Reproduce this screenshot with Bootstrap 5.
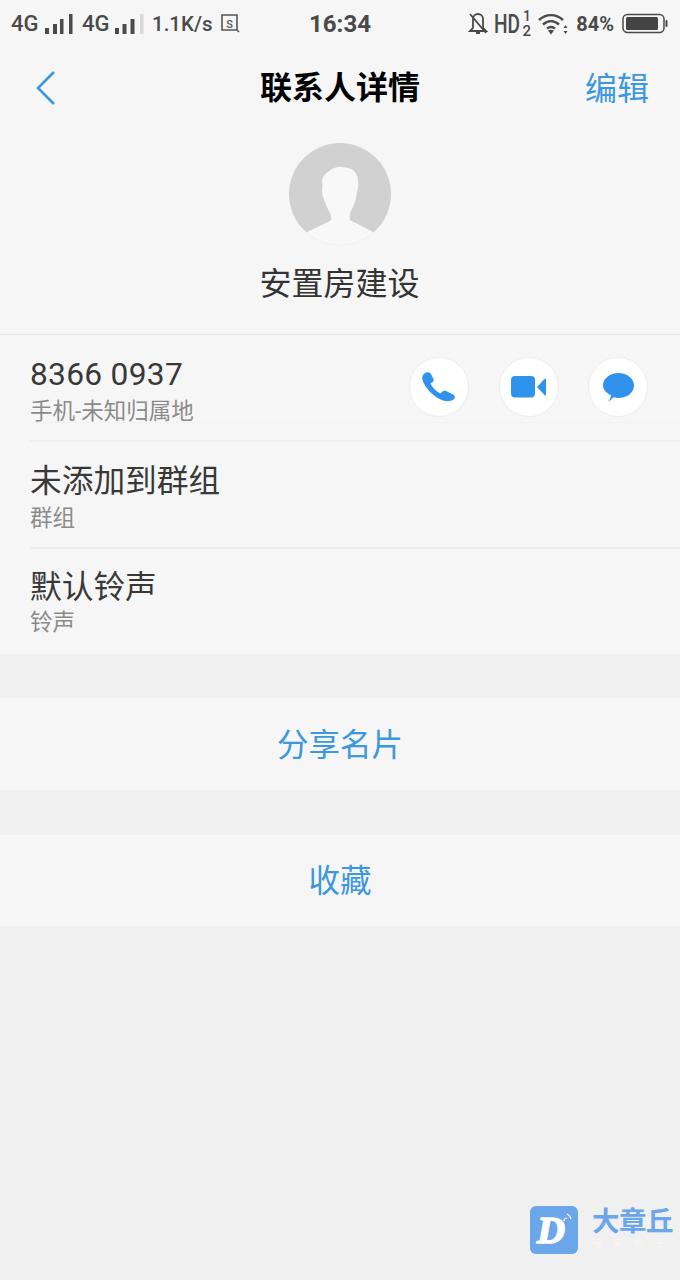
<!DOCTYPE html>
<html lang="zh"><head><meta charset="utf-8"><title>联系人详情</title>
<link href="https://cdn.jsdelivr.net/npm/bootstrap@5.3.0/dist/css/bootstrap.min.css" rel="stylesheet">
<style>
html,body{height:100%}
body{background:#f0f0f0;font-family:"Roboto","Noto Sans CJK SC",sans-serif;color:#333;width:680px;height:1280px;overflow:hidden;position:relative}
.topzone{background:#f6f6f6;height:334px}
.sbar{height:48px;padding:0 12px 0 11px;color:#4a4a4a;font-weight:500}
.sbar .tx{font-size:22px;line-height:48px;width:27px;white-space:nowrap}
.sbar .sp{font-size:20.5px;line-height:48px}
.sbar .pc{font-size:20px;font-weight:700;line-height:48px}
.sbar .tm{font-size:24px;position:absolute;left:0;right:0;top:0;line-height:48px;text-align:center;font-weight:700}
.g6{margin-left:6px}.g8{margin-left:8px}.g9{margin-left:9px}.g4{margin-left:4px}.g7{margin-left:7px}
.navz{height:80px;padding:0 31px 0 36px}
.navz h1{font-size:32px;font-weight:700;color:#000;margin:0;line-height:80px;top:0;position:absolute;left:0;right:0;text-align:center}
.blue{color:#3b97e0}
.edit{font-size:32px;line-height:80px;top:1px}
.avat{width:102px;height:102px;border-radius:50%;background:#d1d1d1;overflow:hidden;margin:15px auto 0;display:block}
.nm{font-size:32px;text-align:center;line-height:40px;margin-top:19px;color:#333;padding-right:1px}
.listz{background:#f6f6f6;border-top:1px solid #e9e9e9;height:320px}
.rowz{height:107px;margin-left:30px;border-bottom:2px solid #eeeeee;padding-top:20px;position:relative}
.rowz.last{border-bottom:0;padding-top:19px}
.rowz.first{height:107px;padding-top:20px}
.rowz.first::after{content:"";position:absolute;left:0;right:0;top:87px;height:1px;background:#f2f2f2}
.ttl{font-size:31.7px;line-height:40px;color:#383838}
.num{letter-spacing:.3px}
.sub{font-size:22.5px;line-height:30px;color:#8b8b8b;margin-top:1px}
.last .sub{margin-top:-1px}
.acts{position:absolute;right:32px;top:22px;gap:29.5px}
.rnd{width:60px;height:60px;border-radius:50%;background:#fff;border:1px solid #f0ecec}
.btnz{background:#f6f6f6;text-align:center;font-size:31.5px;color:#3b97e0}
.b1{margin-top:44px;height:92px;line-height:96px}
.b2{margin-top:45px;height:91px;line-height:93px}
.wm{position:absolute;left:530px;top:1206px;gap:14px}
.wmi{width:48px;height:48px;border-radius:6px;background:#6ba5ea}
.wmt{font-size:27.5px;line-height:30px;font-weight:700;color:#6ba5ea;width:84px;letter-spacing:-.5px;white-space:nowrap;margin-top:1px}
.wms{font-size:10px;line-height:14px;color:#f7f7f7;letter-spacing:11px;white-space:nowrap}
.dlogo{font-family:"Liberation Serif",serif;font-weight:700;font-style:italic;font-size:38px;fill:#fff;stroke:#fff;stroke-width:1.6}
.hd{font-family:"Roboto",sans-serif;fill:#4a4a4a}
</style></head><body>
<div class="topzone">
<div class="sbar d-flex justify-content-between align-items-center position-relative">
<div class="tm">16:34</div>
<div class="d-flex align-items-center">
<span class="tx">4G</span>
<svg width="30" height="22" class="g6" viewBox="0 0 30 22" fill="#4a4a4a"><rect x="1" y="15" width="4" height="6"/><rect x="9" y="11" width="4" height="10"/><rect x="16" y="6" width="3.500" height="15"/><rect x="25" y="1" width="3.500" height="20"/></svg>
<span class="tx g8">4G</span>
<svg width="30" height="22" class="g6" viewBox="0 0 30 22" fill="#4a4a4a"><rect x="0" y="15" width="4" height="6"/><rect x="7.500" y="11" width="4" height="10"/><rect x="15.500" y="6" width="4" height="15"/><rect x="25" y="1" width="3.500" height="20" fill="#d9d9d9"/></svg>
<span class="sp g7">1.1K/s</span>
<svg width="20" height="20" class="g8" viewBox="0 0 20 20" fill="none" stroke="#555" stroke-width="1.600"><path d="M1 1h15v15H1zM16 16l2 2"/><text x="8.500" y="13.500" font-size="11" text-anchor="middle" fill="#555" stroke="none" font-family="Roboto">S</text></svg>
</div>
<div class="d-flex align-items-center">
<svg width="20" height="24" viewBox="0 0 20 24" fill="none" stroke="#4a4a4a" stroke-width="1.800"><path d="M5 7a5 5 0 0 1 10 0v9l3 3H2l3-3z"/><path d="M8 21h4M2 2l16 19"/></svg>
<svg width="40" height="30" class="g6" viewBox="0 0 40 30"><text class="hd" x="0" y="24" font-size="25" textLength="26" lengthAdjust="spacingAndGlyphs">HD</text><text class="hd" x="29" y="12" font-size="14">1</text><text class="hd" x="28.500" y="27" font-size="15">2</text></svg>
<svg width="30" height="24" class="g4" viewBox="0 0 30 24" fill="none" stroke="#4a4a4a" stroke-width="2.400"><path d="M1 8c7-6.500 17-6.500 24 0M5 12.500c5-4.500 11-4.500 16 0M9 16.500c2.500-2 5.500-2 8 0"/><path d="M10 18.500 13 22.500l3-4c-1.500-1-4.500-1-6 0z" fill="#4a4a4a" stroke="none"/><path d="M27.500 13l-2 3h4zM27.500 22l-2-3h4z" fill="#4a4a4a" stroke="none"/></svg>
<span class="pc g8">84%</span>
<svg width="46" height="22" class="g8" viewBox="0 0 46 22"><rect x="1" y="1.500" width="41" height="18" rx="4.500" fill="none" stroke="#4a4a4a" stroke-width="1.500"/><rect x="4" y="4" width="32" height="13" rx="1.500" fill="#444"/><rect x="43.500" y="7" width="2" height="7" rx="1" fill="#4a4a4a"/></svg>
</div>
</div>
<div class="navz d-flex justify-content-between align-items-center position-relative">
<h1>联系人详情</h1>
<svg width="20" height="34" viewBox="0 0 20 34" fill="none" stroke="#3b97e0" stroke-width="2.600"><path d="M18 1 2 17l16 16"/></svg>
<span class="edit blue position-relative">编辑</span>
</div>
<svg class="avat" viewBox="0 0 102 102"><path fill="#f8f8f8" d="M16 90 41 78c1.500-1 1.500-4 0-8-2-4-4-7-5-11-1.500-3-3-7-3-12 1-3 0-6 0-10 2-5 4-7 6-8 4-4 9-5 12-5 5 0 10 1 13 3 3 3 5 6 5 10 1 4 0 8-1 12-.500 4-1.500 7-2 10-1.500 4-3 7-5 11-.500 3 0 6 0 7L86 90v12H16z"/></svg>
<div class="nm">安置房建设</div>
</div>
<div class="listz">
<div class="rowz first">
<div class="ttl num">8366 0937</div>
<div class="sub">手机-未知归属地</div>
<div class="acts d-flex">
<div class="rnd d-flex align-items-center justify-content-center"><svg width="34" height="30" viewBox="0 0 34 30"><path fill="#2f93ee" d="M3 1C5-.5 8 0 9 2l2.500 5c.5 1.500 0 2.500-1.500 3.500l-1.500 1c1.500 3.500 6 8.500 10 10l1.500-1.500c1-1.200 2.500-1.500 4-1l7 3.500c2 1 2.500 3 1 4.500-2 2-6 3-11 1.500C12 25.500 3 16 .5 8-.3 5 .8 2.500 3 1z"/></svg></div>
<div class="rnd d-flex align-items-center justify-content-center"><svg width="35" height="22" viewBox="0 0 35 22"><rect x="0" y="0" width="24" height="21.500" rx="4" fill="#2f93ee"/><path fill="#2f93ee" d="M26 11 33.500 3C34.500 2 35 2.500 35 3.500V18.500c0 1-.5 1.500-1.500.5z"/></svg></div>
<div class="rnd d-flex align-items-center justify-content-center"><svg width="31" height="29" viewBox="0 0 31 29"><path fill="#2f93ee" d="M15.500 0C24 0 31 5.500 31 12.500S24 25 15.500 25c-1.800 0-3.500-.2-5-.7C9 26 7 27.800 5 28.500c1.500-1.500 3-4 3-6.200C3.200 20 0 16.500 0 12.500 0 5.500 7 0 15.500 0z"/></svg></div>
</div>
</div>
<div class="rowz">
<div class="ttl">未添加到群组</div>
<div class="sub">群组</div>
</div>
<div class="rowz last">
<div class="ttl">默认铃声</div>
<div class="sub">铃声</div>
</div>
</div>
<div class="btnz b1">分享名片</div>
<div class="btnz b2">收藏</div>
<div class="wm d-flex">
<div class="wmi"><svg width="48" height="48" viewBox="0 0 48 48"><text class="dlogo" x="7" y="37" textLength="28" lengthAdjust="spacingAndGlyphs">D</text><path d="M34 15a3 3 0 0 1 3-3M37 8a7 7 0 0 1 4 5" fill="none" stroke="#fff" stroke-width="1.200"/></svg></div>
<div><div class="wmt">大章丘</div><div class="wms">每天向善</div></div>
</div>
</body></html>
